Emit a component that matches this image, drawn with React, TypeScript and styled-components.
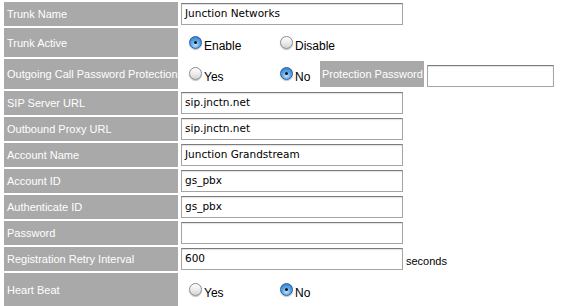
import styled, { createGlobalStyle } from 'styled-components';

const GlobalStyle = createGlobalStyle`
  html, body {
    margin: 0;
    padding: 0;
    background: #ffffff;
    font-family: 'Liberation Sans', Arial, sans-serif;
  }
`;

type Field =
  | { kind: 'text'; label: string; value: string; suffix?: string }
  | { kind: 'radio'; label: string; options: string[]; checked: number; height: number };

const fields: Field[] = [
  { kind: 'text', label: 'Trunk Name', value: 'Junction Networks' },
  { kind: 'radio', label: 'Trunk Active', options: ['Enable', 'Disable'], checked: 0, height: 29 },
];

const rest: Field[] = [
  { kind: 'text', label: 'SIP Server URL', value: 'sip.jnctn.net' },
  { kind: 'text', label: 'Outbound Proxy URL', value: 'sip.jnctn.net' },
  { kind: 'text', label: 'Account Name', value: 'Junction Grandstream' },
  { kind: 'text', label: 'Account ID', value: 'gs_pbx' },
  { kind: 'text', label: 'Authenticate ID', value: 'gs_pbx' },
  { kind: 'text', label: 'Password', value: '' },
  { kind: 'text', label: 'Registration Retry Interval', value: '600', suffix: 'seconds' },
  { kind: 'radio', label: 'Heart Beat', options: ['Yes', 'No'], checked: 1, height: 34 },
];

const Radio = ({ on }: { on: boolean }) => <Dot $on={on} />;

const Option = ({ text, on, width }: { text: string; on: boolean; width?: number }) => (
  <OptionBox $width={width}>
    <Radio on={on} />
    <OptionText>{text}</OptionText>
  </OptionBox>
);

const renderRow = (f: Field) => {
  if (f.kind === 'text') {
    return (
      <Row key={f.label} $height={24}>
        <Label>{f.label}</Label>
        <Cell>
          <TextBox $width={222}>{f.value}</TextBox>
          {f.suffix && <Suffix>{f.suffix}</Suffix>}
        </Cell>
      </Row>
    );
  }
  return (
    <Row key={f.label} $height={f.height}>
      <Label>{f.label}</Label>
      <RadioCell>
        {f.options.map((o, i) => (
          <Option key={o} text={o} on={i === f.checked} width={91} />
        ))}
      </RadioCell>
    </Row>
  );
};

const App = () => {
  return (
    <Page>
      <GlobalStyle />
      <Form>
        {fields.map(renderRow)}
        <Row $height={30}>
          <Label>Outgoing Call Password Protection</Label>
          <RadioCell>
            <Option text='Yes' on={false} width={91} />
            <Option text='No' on={true} width={40} />
            <SubLabel>Protection Password</SubLabel>
            <TextBox $width={127} />
          </RadioCell>
        </Row>
        {rest.map(renderRow)}
      </Form>
    </Page>
  );
};

export default App;

const Page = styled.div`
  width: 566px;
  height: 306px;
  overflow: hidden;
  padding: 2px 0 0 4px;
  box-sizing: border-box;
`;

const Form = styled.div`
  display: flex;
  flex-direction: column;
  gap: 2px;
`;

const Row = styled.div<{ $height: number }>`
  display: grid;
  grid-template-columns: 174px 1fr;
  column-gap: 3px;
  height: ${(p) => p.$height}px;
  flex-shrink: 0;
`;

const Label = styled.div`
  background: #a9a9a9;
  color: #ffffff;
  font-size: 11px;
  display: flex;
  align-items: center;
  padding-left: 3px;
  white-space: nowrap;
  overflow: hidden;
`;

const Cell = styled.div`
  display: flex;
  align-items: center;
`;

const RadioCell = styled.div`
  display: flex;
  align-items: center;
  padding: 3px 0 0 8px;
`;

const TextBox = styled.div<{ $width: number }>`
  width: ${(p) => p.$width}px;
  height: 22px;
  box-sizing: border-box;
  border: 1px solid #a5a5a5;
  border-top-color: #7c7c7c;
  background: #ffffff;
  box-shadow: inset 0 1px 1px rgba(0, 0, 0, 0.12);
  font-family: 'DejaVu Sans', Verdana, sans-serif;
  font-size: 10.5px;
  color: #000;
  padding: 3px 0 0 3px;
  white-space: nowrap;
`;

const Suffix = styled.span`
  font-size: 11px;
  color: #000;
  margin-left: 3px;
  padding-top: 3px;
`;

const OptionBox = styled.div<{ $width?: number }>`
  display: flex;
  align-items: center;
  width: ${(p) => (p.$width ? `${p.$width}px` : 'auto')};
  flex-shrink: 0;
`;

const Dot = styled.span<{ $on: boolean }>`
  display: inline-block;
  position: relative;
  width: 13px;
  height: 13px;
  border-radius: 50%;
  box-sizing: border-box;
  border: 1px solid ${(p) => (p.$on ? '#2d5c99' : '#8a8a8a')};
  background: ${(p) =>
    p.$on
      ? 'radial-gradient(circle at 50% 70%, #bfe3ff 0%, #5aa5ea 45%, #2a6fc4 100%)'
      : 'linear-gradient(#ffffff 0%, #ececec 50%, #d4d4d4 100%)'};
  box-shadow: 0 1px 1px rgba(0, 0, 0, 0.25);
  margin-top: -4px;
  &::after {
    content: '';
    display: ${(p) => (p.$on ? 'block' : 'none')};
    position: absolute;
    left: 4px;
    top: 4px;
    width: 3px;
    height: 3px;
    border-radius: 50%;
    background: #111;
  }
`;

const OptionText = styled.span`
  font-family: 'Liberation Sans', Arial, sans-serif;
  font-size: 12px;
  color: #000;
  margin-left: 2px;
  padding-top: 3px;
`;

const SubLabel = styled.div`
  background: #a9a9a9;
  color: #ffffff;
  font-size: 11px;
  height: 26px;
  width: 104px;
  box-sizing: border-box;
  padding-left: 2px;
  display: flex;
  align-items: center;
  margin: -4px 3px 0 0;
  white-space: nowrap;
  overflow: hidden;
  flex-shrink: 0;
`;
